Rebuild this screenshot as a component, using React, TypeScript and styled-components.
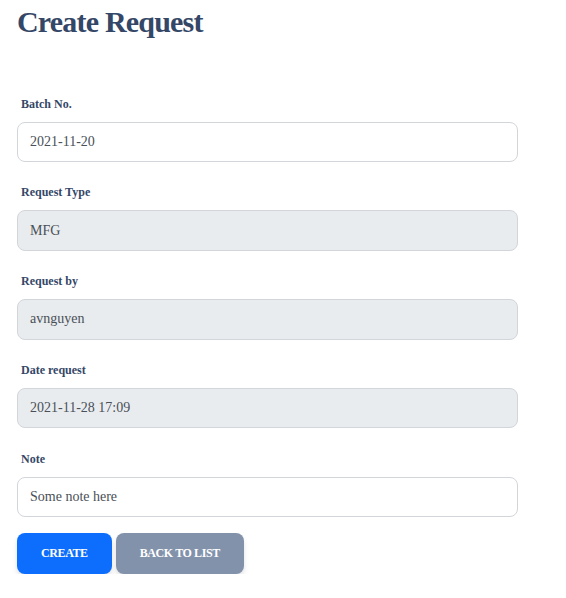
import React from "react";
import styled, { createGlobalStyle } from "styled-components";

const GlobalStyle = createGlobalStyle`
  html, body {
    margin: 0;
    padding: 0;
    background: #ffffff;
    font-family: "Liberation Serif", "Times New Roman", serif;
  }
  * { box-sizing: border-box; }
`;

const Page = styled.div`
  padding: 1px 0 0 17px;
  width: 518px;
`;

const Title = styled.h3`
  margin: 0;
  font-size: 30px;
  line-height: 1.375;
  font-weight: 700;
  letter-spacing: -0.8px;
  color: #344767;
`;

const Form = styled.form`
  display: flex;
  flex-direction: column;
  gap: 21.35px;
  margin-top: 52.5px;
`;

const Field = styled.div`
  display: flex;
  flex-direction: column;
`;

const Label = styled.label`
  display: block;
  margin: 0 0 9px 4px;
  font-size: 12px;
  line-height: 18px;
  font-weight: 700;
  color: #344767;
`;

const Input = styled.input<{ $muted?: boolean }>`
  display: block;
  width: 501px;
  height: 40.4px;
  padding: 8px 12px;
  font-family: "Liberation Serif", "Times New Roman", serif;
  font-size: 14px;
  line-height: 22.4px;
  color: #495057;
  -webkit-text-fill-color: #495057;
  opacity: 1;
  background: ${(p) => (p.$muted ? "#e9ecef" : "#ffffff")};
  border: 1px solid #d2d6da;
  border-radius: 8px;
  outline: none;
`;

const Actions = styled.div`
  display: flex;
  gap: 4px;
  margin-top: -5.35px;
`;

const Button = styled.button<{ $variant: "primary" | "secondary" }>`
  height: 40.6px;
  padding: 0 24px;
  border: 0;
  border-radius: 8px;
  font-family: "Liberation Serif", "Times New Roman", serif;
  font-size: 12px;
  font-weight: 700;
  letter-spacing: -0.4px;
  text-transform: uppercase;
  color: #ffffff;
  background: ${(p) => (p.$variant === "primary" ? "#0d6efd" : "#8392ab")};
  box-shadow: 0 4px 7px -1px rgba(0, 0, 0, 0.11), 0 2px 4px -1px rgba(0, 0, 0, 0.07);
  cursor: pointer;
`;

const fields: { label: string; value: string; muted: boolean }[] = [
  { label: "Batch No.", value: "2021-11-20", muted: false },
  { label: "Request Type", value: "MFG", muted: true },
  { label: "Request by", value: "avnguyen", muted: true },
  { label: "Date request", value: "2021-11-28 17:09", muted: true },
  { label: "Note", value: "Some note here", muted: false },
];

export default function App() {
  return (
    <>
      <GlobalStyle />
      <Page>
        <Title>Create Request</Title>
        <Form onSubmit={(e) => e.preventDefault()}>
          {fields.map((f) => (
            <Field key={f.label}>
              <Label>{f.label}</Label>
              <Input
                $muted={f.muted}
                value={f.value}
                readOnly
                disabled={f.muted}
              />
            </Field>
          ))}
          <Actions>
            <Button type="submit" $variant="primary">Create</Button>
            <Button type="button" $variant="secondary">Back to list</Button>
          </Actions>
        </Form>
      </Page>
    </>
  );
}
